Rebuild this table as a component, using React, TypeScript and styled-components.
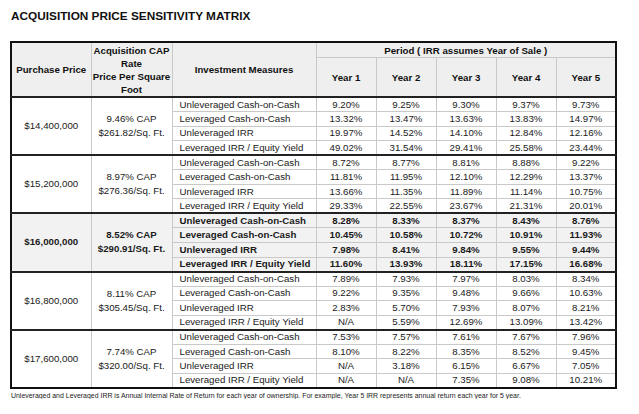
import React from 'react';
import styled, { createGlobalStyle, css } from 'styled-components';

const GlobalStyle = createGlobalStyle`
    body {
        margin: 0;
        background: #ffffff;
        font-family: "Liberation Sans", Arial, sans-serif;
        color: #1a1a1a;
    }
`;

const Page = styled.div`
    padding: 9px 0 0 10px;
    width: 629px;
`;

const Title = styled.h1`
    margin: 0 0 0 1px;
    font-size: 11.8px;
    line-height: 14px;
    font-weight: bold;
    color: #111;
`;

const Matrix = styled.table`
    margin-top: 18px;
    border-collapse: collapse;
    table-layout: fixed;
    width: 606px;
    border: 2px solid #111;
    font-size: 9.7px;
`;

const HeadCell = styled.th<{ $tall?: boolean }>`
    background: #efefef;
    border: 1px solid #c9c9c9;
    font-weight: bold;
    color: #111;
    text-align: center;
    vertical-align: middle;
    padding: 0;
    line-height: 13px;
    white-space: nowrap;
    height: ${ p => p.$tall ? '38px' : '14px' };
`;

const Row = styled.tr<{ $first?: boolean; $bold?: boolean }>`
    height: 14.55px;
    ${ p => p.$bold && css`
        background: #f2f2f2;
        font-weight: bold;
    ` }
    & > td {
        border-top: ${ p => p.$first ? '2px solid #222' : '1px solid #c9c9c9' };
    }
`;

const Cell = styled.td<{ $align?: 'left' | 'center' }>`
    border-left: 1px solid #c9c9c9;
    border-right: 1px solid #c9c9c9;
    padding: 0;
    padding-left: ${ p => p.$align === 'left' ? '7px' : '0' };
    text-align: ${ p => p.$align ?? 'center' };
    vertical-align: middle;
    line-height: 12px;
    white-space: nowrap;
`;

const GroupCell = styled.td`
    border: 1px solid #c9c9c9;
    border-top: 2px solid #222;
    text-align: center;
    vertical-align: middle;
    line-height: 14px;
`;

const Note = styled.p`
    margin: 3px 0 0 1px;
    font-size: 6.95px;
    color: #222;
    white-space: nowrap;
`;

const measures = [
    'Unleveraged Cash-on-Cash',
    'Leveraged Cash-on-Cash',
    'Unleveraged IRR',
    'Leveraged IRR / Equity Yield',
];

const groups = [
    { price: '$14,400,000', cap: '9.46% CAP', psf: '$261.82/Sq. Ft.', rows: [
        ['9.20%', '9.25%', '9.30%', '9.37%', '9.73%'],
        ['13.32%', '13.47%', '13.63%', '13.83%', '14.97%'],
        ['19.97%', '14.52%', '14.10%', '12.84%', '12.16%'],
        ['49.02%', '31.54%', '29.41%', '25.58%', '23.44%'],
    ]},
    { price: '$15,200,000', cap: '8.97% CAP', psf: '$276.36/Sq. Ft.', rows: [
        ['8.72%', '8.77%', '8.81%', '8.88%', '9.22%'],
        ['11.81%', '11.95%', '12.10%', '12.29%', '13.37%'],
        ['13.66%', '11.35%', '11.89%', '11.14%', '10.75%'],
        ['29.33%', '22.55%', '23.67%', '21.31%', '20.01%'],
    ]},
    { price: '$16,000,000', cap: '8.52% CAP', psf: '$290.91/Sq. Ft.', bold: true, rows: [
        ['8.28%', '8.33%', '8.37%', '8.43%', '8.76%'],
        ['10.45%', '10.58%', '10.72%', '10.91%', '11.93%'],
        ['7.98%', '8.41%', '9.84%', '9.55%', '9.44%'],
        ['11.60%', '13.93%', '18.11%', '17.15%', '16.68%'],
    ]},
    { price: '$16,800,000', cap: '8.11% CAP', psf: '$305.45/Sq. Ft.', rows: [
        ['7.89%', '7.93%', '7.97%', '8.03%', '8.34%'],
        ['9.22%', '9.35%', '9.48%', '9.66%', '10.63%'],
        ['2.83%', '5.70%', '7.93%', '8.07%', '8.21%'],
        ['N/A', '5.59%', '12.69%', '13.09%', '13.42%'],
    ]},
    { price: '$17,600,000', cap: '7.74% CAP', psf: '$320.00/Sq. Ft.', rows: [
        ['7.53%', '7.57%', '7.61%', '7.67%', '7.96%'],
        ['8.10%', '8.22%', '8.35%', '8.52%', '9.45%'],
        ['N/A', '3.18%', '6.15%', '6.67%', '7.05%'],
        ['N/A', 'N/A', '7.35%', '9.08%', '10.21%'],
    ]},
];

const years = ['Year 1', 'Year 2', 'Year 3', 'Year 4', 'Year 5'];

export default function App() {
    return (
        <Page>
            <GlobalStyle />
            <Title>ACQUISITION PRICE SENSITIVITY MATRIX</Title>
            <Matrix>
                <colgroup>
                    <col style={{ width: 80 }} />
                    <col style={{ width: 81 }} />
                    <col style={{ width: 144 }} />
                    { years.map(y => <col key={ y } style={{ width: 60 }} />) }
                </colgroup>
                <thead>
                    <tr>
                        <HeadCell rowSpan={ 2 }>Purchase Price</HeadCell>
                        <HeadCell rowSpan={ 2 }>Acquisition CAP<br />Rate<br />Price Per Square<br />Foot</HeadCell>
                        <HeadCell rowSpan={ 2 }>Investment Measures</HeadCell>
                        <HeadCell colSpan={ 5 }>Period ( IRR assumes Year of Sale )</HeadCell>
                    </tr>
                    <tr>
                        { years.map(y => <HeadCell key={ y } $tall>{ y }</HeadCell>) }
                    </tr>
                </thead>
                <tbody>
                    { groups.map(g => g.rows.map((vals, i) => (
                        <Row key={ g.price + i } $first={ i === 0 } $bold={ g.bold }>
                            { i === 0 && <GroupCell rowSpan={ 4 }>{ g.price }</GroupCell> }
                            { i === 0 && <GroupCell rowSpan={ 4 }>{ g.cap }<br />{ g.psf }</GroupCell> }
                            <Cell $align="left">{ measures[i] }</Cell>
                            { vals.map((v, j) => <Cell key={ j }>{ v }</Cell>) }
                        </Row>
                    ))) }
                </tbody>
            </Matrix>
            <Note>Unleveraged and Leveraged IRR is Annual Internal Rate of Return for each year of ownership. For example, Year 5 IRR represents annual return each year for 5 year.</Note>
        </Page>
    );
}
